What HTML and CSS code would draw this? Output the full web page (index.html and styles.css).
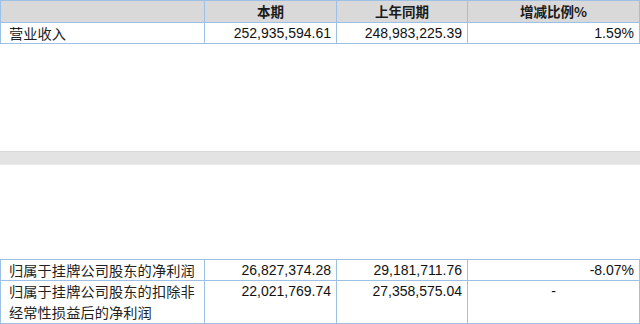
FILE: index.html
```html
<!DOCTYPE html>
<html lang="zh">
<head>
<meta charset="utf-8">
<link rel="stylesheet" href="styles.css">
</head>
<body>
<table class="grid top">
  <colgroup><col class="c1"><col class="c2"><col class="c3"><col class="c4"></colgroup>
  <tr class="head">
    <td></td>
    <td class="hd">本期</td>
    <td class="hd">上年同期</td>
    <td class="hd">增减比例%</td>
  </tr>
  <tr class="row">
    <td class="label">营业收入</td>
    <td class="num">252,935,594.61</td>
    <td class="num">248,983,225.39</td>
    <td class="num">1.59%</td>
  </tr>
</table>
<div class="band"></div>
<table class="grid bottom">
  <colgroup><col class="c1"><col class="c2"><col class="c3"><col class="c4"></colgroup>
  <tr class="row">
    <td class="label">归属于挂牌公司股东的净利润</td>
    <td class="num">26,827,374.28</td>
    <td class="num">29,181,711.76</td>
    <td class="num">-8.07%</td>
  </tr>
  <tr class="row2">
    <td class="label">归属于挂牌公司股东的扣除非<br>经常性损益后的净利润</td>
    <td class="num">22,021,769.74</td>
    <td class="num">27,358,575.04</td>
    <td class="ctr">-</td>
  </tr>
</table>
</body>
</html>
```
FILE: styles.css
```css
html, body {
  margin: 0;
  padding: 0;
  background: #ffffff;
}
body {
  width: 640px;
  height: 324px;
  overflow: hidden;
  font-family: "Liberation Sans", "Noto Sans CJK SC", sans-serif;
  color: #111;
}
.grid {
  border-collapse: collapse;
  table-layout: fixed;
  width: 639px;
}
.grid td {
  border: 1px solid #9dc0e6;
  padding: 0 5px;
  white-space: nowrap;
  vertical-align: top;
  box-sizing: border-box;
}
.c1 { width: 204px; }
.c2 { width: 132px; }
.c3 { width: 131px; }
.c4 { width: 172px; }
.head td {
  background: #d9d9d9;
  height: 22px;
  line-height: 21px;
}
.hd {
  text-align: center;
  font-family: "Noto Sans CJK SC", sans-serif;
  font-weight: bold;
  font-size: 13.5px;
  color: #1a1a1a;
}
.row td {
  height: 21px;
  line-height: 20px;
}
.row2 td {
  height: 43px;
  line-height: 21px;
}
.label {
  font-family: "Noto Sans CJK SC", sans-serif;
  font-size: 14.2px;
  letter-spacing: 0.1px;
  padding-left: 8px !important;
  color: #222;
}
.num {
  text-align: right;
  font-size: 14px;
  padding-right: 5px;
}
.ctr {
  text-align: center;
  font-size: 14px;
}
.band {
  margin-top: 107px;
  height: 12px;
  background: #e3e3e3;
  border-top: 1px solid #d9d9d9;
  border-bottom: 1px solid #ebebeb;
}
.bottom {
  margin-top: 94px;
}
```
